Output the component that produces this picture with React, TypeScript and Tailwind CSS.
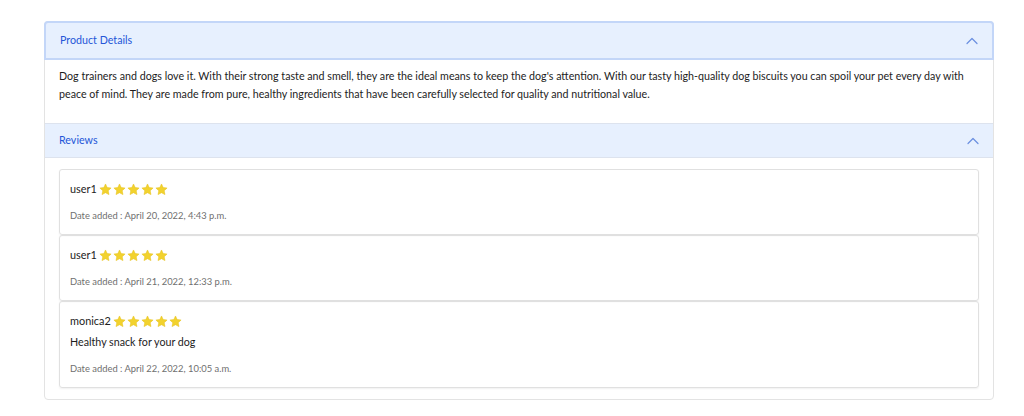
import React from "react";

const Star = () => (
  <svg width="13" height="13" viewBox="0 0 24 24" className="shrink-0">
    <path
      d="M12 1.8l3.1 6.6 7.2.9-5.3 5 1.4 7.1L12 17.9l-6.4 3.5 1.4-7.1-5.3-5 7.2-.9z"
      fill="#f2d22e"
      stroke="#e6c21c"
      strokeWidth="1"
      strokeLinejoin="round"
    />
  </svg>
);

const Chevron = () => (
  <svg width="12" height="8" viewBox="0 0 12 8" fill="none">
    <path d="M1 6.5L6 1.5l5 5" stroke="#6b8fe0" strokeWidth="1.2" strokeLinecap="round" strokeLinejoin="round" />
  </svg>
);

const Stars = () => (
  <div className="flex items-center gap-[1px] ml-[2px]">
    <Star />
    <Star />
    <Star />
    <Star />
    <Star />
  </div>
);

type Review = { user: string; text?: string; date: string };

const reviews: Review[] = [
  { user: "user1", date: "April 20, 2022, 4:43 p.m." },
  { user: "user1", date: "April 21, 2022, 12:33 p.m." },
  { user: "monica2", text: "Healthy snack for your dog", date: "April 22, 2022, 10:05 a.m." },
];

export default function App() {
  return (
    <div
      className="w-[1024px] h-[416px] bg-white pt-[21px] px-[44px] text-[#212529]"
      style={{ fontFamily: "Lato, 'Noto Sans', sans-serif" }}
    >
      <div className="w-[950px] border border-[#e3e3e3] rounded-[4px]">
        {/* Header 1 (focused) */}
        <div className="h-[39px] flex items-center justify-between pl-[14px] pr-[14px] bg-[#e7f0fe] border-2 border-[#c3d6f8] rounded-t-[4px] -m-[1px] mb-0 relative">
          <span className="text-[10.7px] text-[#2456d8]">Product Details</span>
          <Chevron />
        </div>
        <div className="px-[14px] pt-[7px] pb-[20px] text-[10.7px] leading-[18px] text-[#1d1d1d]">
          Dog trainers and dogs love it. With their strong taste and smell, they are the ideal means to keep the dog's attention. With our tasty high-quality dog biscuits you can spoil your pet every day with peace of mind. They are made from pure, healthy ingredients that have been carefully selected for quality and nutritional value.
        </div>
        {/* Header 2 */}
        <div className="h-[35px] flex items-center justify-between pl-[14px] pr-[14px] bg-[#e7f0fe] border-y border-[#dde3ee]">
          <span className="text-[10.7px] text-[#2456d8]">Reviews</span>
          <Chevron />
        </div>
        <div className="px-[14px] pt-[11px] pb-[11px]">
          {reviews.map((r, i) => (
            <div
              key={i}
              className="border border-[#e0e0e0] rounded-[3px] shadow-[0_1px_2px_rgba(0,0,0,0.06)] px-[10px] pt-[10px] pb-[9px]"
            >
              <div className="flex items-center h-[18px]">
                <span className="text-[10.9px] text-[#1d1d1d]">{r.user}</span>
                <Stars />
              </div>
              {r.text && (
                <div className="text-[10.7px] text-[#1d1d1d] mt-[3px] h-[18px] leading-[18px]">{r.text}</div>
              )}
              <div className="text-[9.4px] text-[#6f6f6f] mt-[9px] leading-[18px]">
                Date added : {r.date}
              </div>
            </div>
          ))}
        </div>
      </div>
    </div>
  );
}
